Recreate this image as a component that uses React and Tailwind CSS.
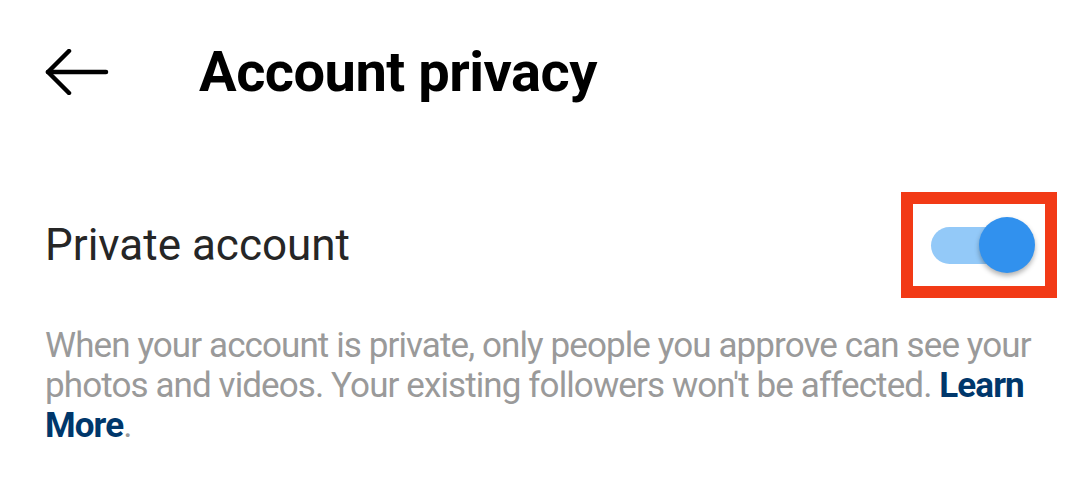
import React, { useState } from 'react'

export default function App() {
  const [on, setOn] = useState(true)
  return (
    <div className="w-[1080px] h-[496px] bg-white overflow-hidden" style={{ fontFamily: 'Roboto, "Noto Sans", sans-serif' }}>
      <div className="flex items-center h-[90px] mt-[27px] pl-[45px]">
        <svg width="64" height="46" viewBox="0 0 64 46" fill="none" stroke="#000" strokeWidth="4.5" strokeLinecap="round" strokeLinejoin="round">
          <path d="M3 23 H61" />
          <path d="M24 2 L3 23 L24 44" />
        </svg>
        <h1 className="ml-[90px] text-[56px] font-bold text-black leading-none tracking-[-0.5px]">Account privacy</h1>
      </div>

      <div className="flex items-center justify-between pl-[45px] pr-[23px] mt-[75px]">
        <span className="text-[44px] text-[#262626] leading-none">Private account</span>
        <button onClick={() => setOn(!on)} className="border-[12px] border-[#f23a16] w-[156px] h-[106px] flex items-center justify-center">
          <div className="relative w-[104px] h-[56px] flex items-center">
            <div className={`ml-[4px] w-[86px] h-[37px] rounded-full ${on ? 'bg-[#93c9f8]' : 'bg-gray-300'}`} />
            <div className={`absolute top-0 w-[56px] h-[56px] rounded-full shadow-[0_3px_5px_rgba(0,0,0,0.3)] ${on ? 'right-[-4px] bg-[#3191ee]' : 'left-0 bg-white'}`} />
          </div>
        </button>
      </div>

      <p className="pl-[45px] pr-[36px] mt-[28px] text-[35px] leading-[40px] text-[#9a9a9a] tracking-[-0.9px]">
        When your account is private, only people you approve can see your photos and videos. Your existing followers won't be affected. <span className="font-bold text-[#00376b]">Learn More</span>.
      </p>
    </div>
  )
}
